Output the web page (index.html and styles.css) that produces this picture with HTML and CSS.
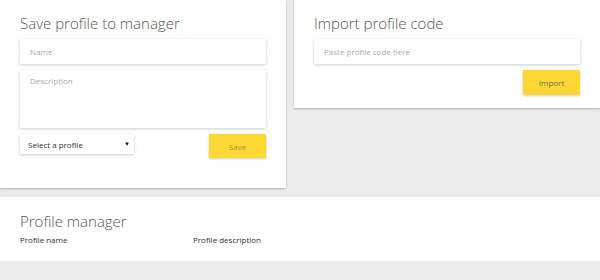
FILE: index.html
```html
<!DOCTYPE html>
<html lang="en">
<head>
  <meta charset="UTF-8" />
  <title>Profiles</title>
  <link rel="stylesheet" href="styles.css">
</head>
<body>
  <div class="top">
    <!-- Save profile -->
    <section class="card save-card">
      <h2>Save profile to manager</h2>
      <input class="field" placeholder="Name">
      <textarea class="field area" placeholder="Description"></textarea>
      <div class="row">
        <label class="select-wrap">
          <select class="select">
            <option>Select a profile</option>
          </select>
          <span class="arrow">▼</span>
        </label>
        <button class="btn" disabled>Save</button>
      </div>
    </section>
    <!-- Import profile -->
    <section class="card import-card">
      <h2>Import profile code</h2>
      <input class="field" placeholder="Paste profile code here">
      <div class="row end">
        <button class="btn dark">Import</button>
      </div>
    </section>
  </div>
  <!-- Manager -->
  <section class="manager">
    <h2>Profile manager</h2>
    <div class="cols">
      <span class="col-name">Profile name</span>
      <span>Profile description</span>
    </div>
  </section>
</body>
</html>
```
FILE: styles.css
```css
* { margin:0; padding:0; box-sizing:border-box; }
body { background:#ececec; font-family:"Open Sans", "Liberation Sans", sans-serif; color:#444; }
.top { display:grid; grid-template-columns:286px 1fr; gap:8px; align-items:start; }
.card { background:#fff; box-shadow:0 1px 2px rgba(0,0,0,0.25); padding:13px 20px 0; display:flex; flex-direction:column; gap:6px; }
.save-card { padding-bottom:30px; }
.import-card { padding-bottom:13px; }
h2 { font-weight:300; font-size:15px; color:#555; line-height:20px; }
.field { display:block; width:100%; height:25px; border:none; outline:none; padding:0 10px; font-family:inherit; font-size:8px; color:#333; background:#fff; box-shadow:0 1px 3px rgba(0,0,0,0.2); }
.field::placeholder { color:#aaa; }
.area { height:58px; padding-top:5px; resize:none; }
.row { display:flex; justify-content:space-between; align-items:flex-start; }
.row.end { justify-content:flex-end; }
.select-wrap { position:relative; display:block; width:114px; }
.select { appearance:none; -webkit-appearance:none; display:block; width:100%; height:20px; border:none; outline:none; padding:0 8px; font-family:inherit; font-size:8px; color:#333; background:#fff; box-shadow:0 1px 3px rgba(0,0,0,0.22); }
.arrow { position:absolute; right:4px; top:7px; font-size:6px; line-height:6px; color:#111; pointer-events:none; }
.btn { width:57px; height:24px; border:none; background:#fdd835; font-family:inherit; font-size:8px; color:#a69136; box-shadow:0 1px 2px rgba(0,0,0,0.2); }
.btn.dark { height:25px; color:#6a6a5a; }
.manager { margin-top:9px; background:#fff; box-shadow:0 1px 2px rgba(0,0,0,0.2); padding:14px 20px 15px; }
.manager h2 { margin-bottom:3px; }
.cols { display:flex; font-size:8px; color:#333; line-height:12px; }
.col-name { width:173px; }
```
